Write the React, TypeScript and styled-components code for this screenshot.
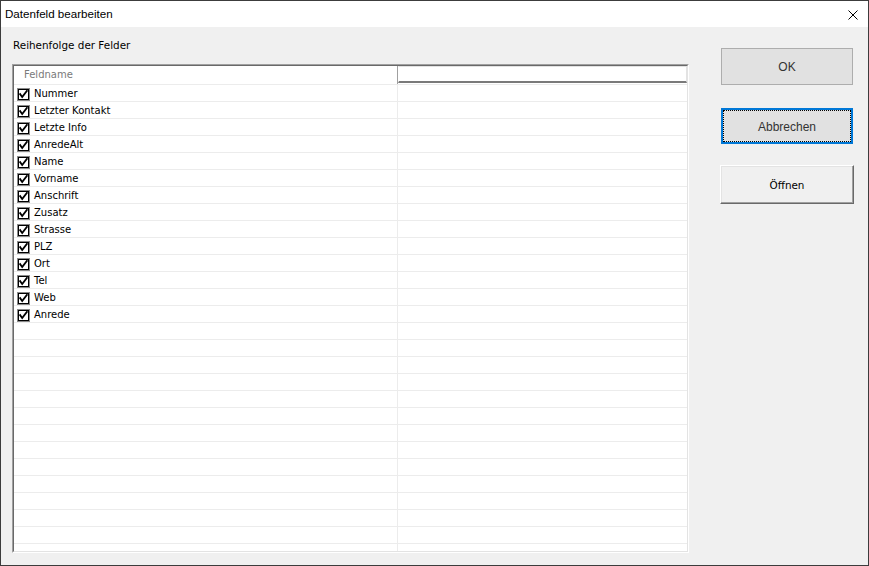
import React from "react";
import styled, { createGlobalStyle } from "styled-components";

const Global = createGlobalStyle`
  html, body { margin: 0; padding: 0; background: #ffffff; }
  #root { width: 869px; height: 566px; }
`;

const UI_FONT = `"DejaVu Sans", Verdana, sans-serif`;
const TITLE_FONT = `"Liberation Sans", Arial, sans-serif`;

const Window = styled.div`
  width: 869px;
  height: 566px;
  box-sizing: border-box;
  border: 1px solid #3c3c3c;
  background: #f0f0f0;
  display: flex;
  flex-direction: column;
  overflow: hidden;
`;

const TitleBar = styled.div`
  height: 26px;
  flex: none;
  background: #ffffff;
  display: flex;
  align-items: center;
  justify-content: space-between;
  padding: 0 10px 0 4px;
`;

const Title = styled.span`
  font-family: ${TITLE_FONT};
  font-size: 11.6px;
  line-height: 14px;
  margin-top: -1px;
  color: #000;
`;

const CloseIcon = styled.svg`
  width: 10px;
  height: 10px;
  display: block;
  margin-top: 1px;
`;

const Body = styled.div`
  flex: 1;
  display: flex;
  padding: 12px 13px 12px 11px;
  min-height: 0;
`;

const LeftPane = styled.div`
  display: flex;
  flex-direction: column;
  width: 677px;
`;

const Label = styled.div`
  font-family: ${UI_FONT};
  font-size: 10.4px;
  line-height: 13px;
  color: #000;
  padding-left: 1px;
  margin-bottom: 12px;
`;

const GridFrame = styled.div`
  flex: 1;
  min-height: 0;
  display: flex;
  border-style: solid;
  border-width: 1px;
  border-color: #a0a0a0 #ffffff #ffffff #a0a0a0;
`;

const GridInner = styled.div`
  flex: 1;
  min-width: 0;
  display: flex;
  flex-direction: column;
  overflow: hidden;
  background: #ffffff;
  border-style: solid;
  border-width: 1px;
  border-color: #696969 #e3e3e3 #e3e3e3 #696969;
`;

const HeaderRow = styled.div`
  flex: none;
  height: 18px;
  display: flex;
  border-bottom: 1px solid #ececec;
`;

const HeaderName = styled.div`
  width: 373px;
  padding-left: 10px;
  border-right: 1px solid #a0a0a0;
  font-family: ${UI_FONT};
  font-size: 10px;
  line-height: 17px;
  color: #7a7a7a;
`;

const HeaderBlank = styled.div`
  flex: 1;
  height: 17px;
  box-sizing: border-box;
  border-style: solid;
  border-width: 1px 1px 2px 1px;
  border-color: #e3e3e3 #e3e3e3 #7a7a7a #ffffff;
`;

const Row = styled.div`
  flex: none;
  height: 16px;
  display: flex;
  border-bottom: 1px solid #ececec;
`;

const NameCell = styled.div`
  box-sizing: border-box;
  width: 384px;
  height: 16px;
  border-right: 1px solid #ececec;
  display: flex;
  align-items: center;
  padding: 2px 0 0 3px;
  font-family: ${UI_FONT};
  font-size: 10px;
  line-height: 14px;
  color: #000;
  white-space: nowrap;
`;

const ValueCell = styled.div`
  flex: 1;
`;

const Box = styled.svg`
  width: 13px;
  height: 13px;
  flex: none;
  display: block;
  margin-right: 4px;
`;

const RightPane = styled.div`
  width: 134px;
  margin-left: 31px;
  padding-top: 9px;
  display: flex;
  flex-direction: column;
  align-items: center;
`;

const FlatButton = styled.div<{ $focused?: boolean }>`
  position: relative;
  width: 132px;
  height: ${(p) => (p.$focused ? 36 : 37)}px;
  box-sizing: border-box;
  background: #e1e1e1;
  border: ${(p) => (p.$focused ? "2px solid #0078d7" : "1px solid #adadad")};
  display: flex;
  align-items: center;
  justify-content: center;
  font-family: ${TITLE_FONT};
  font-size: 12px;
  color: #333333;
  padding-top: 1px;
  margin-bottom: ${(p) => (p.$focused ? 21 : 23)}px;
  &::after {
    content: "";
    display: ${(p) => (p.$focused ? "block" : "none")};
    position: absolute;
    inset: 0;
    border: 1px dotted #000;
  }
`;

const ClassicButton = styled.div`
  width: 134px;
  height: 39px;
  box-sizing: border-box;
  background: #f0f0f0;
  border-style: solid;
  border-width: 1px;
  border-color: #ffffff #696969 #696969 #ffffff;
  box-shadow: inset -1px -1px 0 #a0a0a0, inset 1px 1px 0 #e3e3e3;
  display: flex;
  align-items: center;
  justify-content: center;
  font-family: ${UI_FONT};
  font-size: 10.4px;
  color: #000;
`;

const Check = () => (
  <Box viewBox="0 0 13 13">
    <rect x="0.5" y="0.5" width="12" height="12" fill="#fff" stroke="#8a8a8a" />
    <rect x="1.5" y="1.5" width="10" height="10" fill="#fff" stroke="#000" />
    <path d="M3.2 6.2 L5.2 9 L9.8 3" fill="none" stroke="#000" strokeWidth="1.9" strokeLinecap="square" />
  </Box>
);

const fields = [
  "Nummer",
  "Letzter Kontakt",
  "Letzte Info",
  "AnredeAlt",
  "Name",
  "Vorname",
  "Anschrift",
  "Zusatz",
  "Strasse",
  "PLZ",
  "Ort",
  "Tel",
  "Web",
  "Anrede",
];

const EMPTY_ROWS = 16;

export default function App() {
  return (
    <>
      <Global />
      <Window>
        <TitleBar>
          <Title>Datenfeld bearbeiten</Title>
          <CloseIcon viewBox="0 0 10 10">
            <path d="M0.5 0.5 L9.5 9.5 M9.5 0.5 L0.5 9.5" stroke="#000" strokeWidth="1" fill="none" />
          </CloseIcon>
        </TitleBar>
        <Body>
          <LeftPane>
            <Label>Reihenfolge der Felder</Label>
            <GridFrame>
              <GridInner>
                <HeaderRow>
                  <HeaderName>Feldname</HeaderName>
                  <HeaderBlank />
                </HeaderRow>
                {fields.map((f) => (
                  <Row key={f}>
                    <NameCell>
                      <Check />
                      {f}
                    </NameCell>
                    <ValueCell />
                  </Row>
                ))}
                {Array.from({ length: EMPTY_ROWS }).map((_, i) => (
                  <Row key={"e" + i}>
                    <NameCell />
                    <ValueCell />
                  </Row>
                ))}
              </GridInner>
            </GridFrame>
          </LeftPane>
          <RightPane>
            <FlatButton>OK</FlatButton>
            <FlatButton $focused>Abbrechen</FlatButton>
            <ClassicButton>Öffnen</ClassicButton>
          </RightPane>
        </Body>
      </Window>
    </>
  );
}
